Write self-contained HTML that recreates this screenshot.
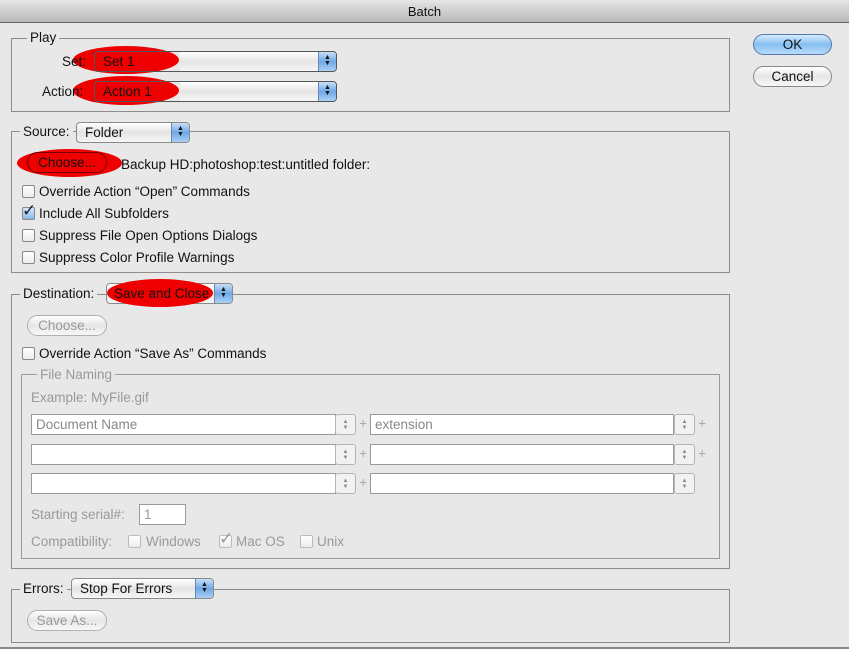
<!DOCTYPE html>
<html><head><meta charset="utf-8"><style>
*{box-sizing:border-box;margin:0;padding:0}
body{width:849px;height:649px;overflow:hidden;background:#e8e8e8;font-family:"Liberation Sans",sans-serif;font-size:13.5px;color:#111;position:relative}
.a{position:absolute;white-space:nowrap}
.title{left:0;top:0;width:849px;height:23px;background:linear-gradient(#e6e6e6,#b8b8b8);border-bottom:1px solid #666;text-align:center;line-height:23px;font-size:13px}
.box{position:absolute;border:1px solid #8c8c8c}
.leg{position:absolute;background:#e8e8e8;padding:0 3px;line-height:16px}
.pop{position:absolute;height:21px;border:1px solid #8a8a8a;border-radius:4px;background:linear-gradient(#fff,#e4e4e4 50%,#f6f6f6);line-height:19px;padding-left:8px;overflow:hidden}
.pop .arr{position:absolute;right:0;top:0;width:18px;height:19px;background:linear-gradient(#c9e0f8,#6fa8e6 50%,#a9d0f5);border-left:1px solid #6b86b0;font-size:7px;line-height:6px;text-align:center;padding-top:3px;color:#111}
.ell{position:absolute;background:#e00;border-radius:50%}
.btn{position:absolute;height:21px;border:1px solid #888;border-radius:11px;background:linear-gradient(#fff,#e6e6e6 50%,#f8f8f8);text-align:center;line-height:19px}
.dis{color:#999;border-color:#b0b0b0}
.cb{position:absolute;width:13px;height:13px;border:1px solid #888;border-radius:2px;background:linear-gradient(#fff,#ececec)}
.fld{position:absolute;height:21px;border:1px solid #9a9a9a;background:#fff;color:#888;line-height:19px;padding-left:4px}
.stp{position:absolute;width:21px;height:21px;border:1px solid #b4b4b4;border-radius:3px;background:#f2f2f2;font-size:6px;line-height:6px;text-align:center;padding-top:4px;color:#888}
.plus{position:absolute;color:#aaa;font-size:14px}
.g{color:#999}
.ck{position:absolute;font-size:17px;line-height:17px}
</style></head><body>
<div class="a title">Batch</div>
<div class="a" style="left:0;top:647px;width:849px;height:2px;background:#888"></div>

<!-- Play -->
<div class="box" style="left:11px;top:38px;width:719px;height:74px"></div>
<div class="leg" style="left:27px;top:30px">Play</div>
<div class="ell" style="left:73px;top:46px;width:106px;height:28px"></div>
<div class="ell" style="left:73px;top:76px;width:106px;height:29px"></div>
<div class="a" style="left:62px;top:54px">Set:</div>
<div class="a" style="left:42px;top:84px">Action:</div>
<div class="pop" style="left:94px;top:51px;width:243px;background:transparent;border-color:#555">Set 1<div class="arr">▲<br>▼</div></div>
<div class="pop" style="left:94px;top:81px;width:243px;background:transparent;border-color:#555">Action 1<div class="arr">▲<br>▼</div></div>
<div class="a" style="left:180px;top:52px;width:138px;height:19px;background:linear-gradient(#fff,#e4e4e4 50%,#f6f6f6)"></div>
<div class="a" style="left:180px;top:82px;width:138px;height:19px;background:linear-gradient(#fff,#e4e4e4 50%,#f6f6f6)"></div>

<!-- Source -->
<div class="box" style="left:11px;top:131px;width:719px;height:142px"></div>
<div class="leg" style="left:20px;top:124px">Source:</div>
<div class="pop" style="left:76px;top:122px;width:114px">Folder<div class="arr">▲<br>▼</div></div>
<div class="ell" style="left:17px;top:149px;width:105px;height:28px"></div>
<div class="btn" style="left:27px;top:152px;width:80px;background:transparent;border-color:#700">Choose...</div>
<div class="a" style="left:121px;top:157px">Backup HD:photoshop:test:untitled folder:</div>
<div class="cb" style="left:22px;top:185px"></div><div class="a" style="left:39px;top:184px">Override Action “Open” Commands</div>
<div class="cb" style="left:22px;top:207px;background:linear-gradient(#d8e8fa,#8ab6e8)"></div><div class="ck" style="left:22px;top:202px;color:#123">✓</div><div class="a" style="left:39px;top:206px">Include All Subfolders</div>
<div class="cb" style="left:22px;top:229px"></div><div class="a" style="left:39px;top:228px">Suppress File Open Options Dialogs</div>
<div class="cb" style="left:22px;top:251px"></div><div class="a" style="left:39px;top:250px">Suppress Color Profile Warnings</div>

<!-- Destination -->
<div class="box" style="left:11px;top:294px;width:719px;height:275px"></div>
<div class="leg" style="left:20px;top:286px">Destination:</div>
<div class="pop" style="left:106px;top:283px;width:127px">Save and Close<div class="arr">▲<br>▼</div></div>
<div class="ell" style="left:107px;top:279px;width:106px;height:28px"></div>
<div class="a" style="left:114px;top:286px">Save and Close</div>
<div class="btn dis" style="left:27px;top:315px;width:80px">Choose...</div>
<div class="cb" style="left:22px;top:347px"></div><div class="a" style="left:39px;top:346px">Override Action “Save As” Commands</div>

<div class="box" style="left:21px;top:374px;width:699px;height:185px;border-color:#9a9a9a"></div>
<div class="leg g" style="left:37px;top:367px">File Naming</div>
<div class="a g" style="left:31px;top:390px">Example: MyFile.gif</div>

<div class="fld" style="left:31px;top:414px;width:305px">Document Name</div><div class="stp" style="left:335px;top:414px">▲<br>▼</div><div class="plus" style="left:359px;top:415px">+</div>
<div class="fld" style="left:370px;top:414px;width:304px">extension</div><div class="stp" style="left:674px;top:414px">▲<br>▼</div><div class="plus" style="left:698px;top:415px">+</div>
<div class="fld" style="left:31px;top:444px;width:305px"></div><div class="stp" style="left:335px;top:444px">▲<br>▼</div><div class="plus" style="left:359px;top:445px">+</div>
<div class="fld" style="left:370px;top:444px;width:304px"></div><div class="stp" style="left:674px;top:444px">▲<br>▼</div><div class="plus" style="left:698px;top:445px">+</div>
<div class="fld" style="left:31px;top:473px;width:305px"></div><div class="stp" style="left:335px;top:473px">▲<br>▼</div><div class="plus" style="left:359px;top:474px">+</div>
<div class="fld" style="left:370px;top:473px;width:304px"></div><div class="stp" style="left:674px;top:473px">▲<br>▼</div>

<div class="a g" style="left:31px;top:507px">Starting serial#:</div>
<div class="fld" style="left:139px;top:504px;width:47px;color:#999">1</div>
<div class="a g" style="left:31px;top:534px">Compatibility:</div>
<div class="cb" style="left:128px;top:535px;border-color:#bbb"></div><div class="a g" style="left:146px;top:534px">Windows</div>
<div class="cb" style="left:219px;top:535px;border-color:#bbb"></div><div class="ck g" style="left:219px;top:530px">✓</div><div class="a g" style="left:236px;top:534px">Mac OS</div>
<div class="cb" style="left:300px;top:535px;border-color:#bbb"></div><div class="a g" style="left:317px;top:534px">Unix</div>

<!-- Errors -->
<div class="box" style="left:11px;top:589px;width:719px;height:54px"></div>
<div class="leg" style="left:20px;top:581px">Errors:</div>
<div class="pop" style="left:71px;top:578px;width:143px">Stop For Errors<div class="arr">▲<br>▼</div></div>
<div class="btn dis" style="left:27px;top:610px;width:80px">Save As...</div>

<!-- Buttons -->
<div class="btn" style="left:753px;top:34px;width:79px;background:linear-gradient(#d6ebfd,#86bff2 50%,#b8dcfb);border-color:#5577aa">OK</div>
<div class="btn" style="left:753px;top:66px;width:79px">Cancel</div>
</body></html>
